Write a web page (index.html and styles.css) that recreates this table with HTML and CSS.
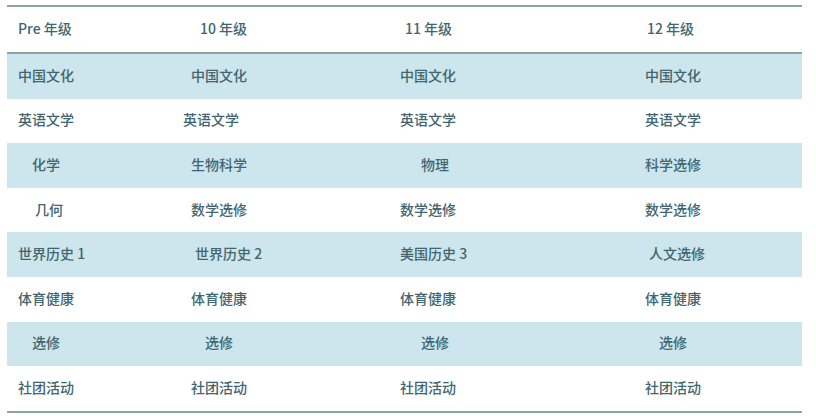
FILE: index.html
```html
<!DOCTYPE html>
<html lang="zh">
<head>
<meta charset="utf-8">
<link rel="stylesheet" href="styles.css">
</head>
<body>
<div class="table">
  <div class="row head">
    <div class="cell p11">Pre 年级</div>
    <div class="cell p17">10 年级</div>
    <div class="cell p5">11 年级</div>
    <div class="cell p2">12 年级</div>
  </div>
  <div class="row blue">
    <div class="cell p11">中国文化</div>
    <div class="cell p8">中国文化</div>
    <div class="cell p0">中国文化</div>
    <div class="cell p0">中国文化</div>
  </div>
  <div class="row">
    <div class="cell p11">英语文学</div>
    <div class="cell p0">英语文学</div>
    <div class="cell p0">英语文学</div>
    <div class="cell p0">英语文学</div>
  </div>
  <div class="row blue">
    <div class="cell p25">化学</div>
    <div class="cell p8">生物科学</div>
    <div class="cell p21">物理</div>
    <div class="cell p0">科学选修</div>
  </div>
  <div class="row">
    <div class="cell p28">几何</div>
    <div class="cell p8">数学选修</div>
    <div class="cell p0">数学选修</div>
    <div class="cell p0">数学选修</div>
  </div>
  <div class="row blue">
    <div class="cell p11">世界历史 1</div>
    <div class="cell p12">世界历史 2</div>
    <div class="cell p0">美国历史 3</div>
    <div class="cell p4">人文选修</div>
  </div>
  <div class="row">
    <div class="cell p11">体育健康</div>
    <div class="cell p8">体育健康</div>
    <div class="cell p0">体育健康</div>
    <div class="cell p0">体育健康</div>
  </div>
  <div class="row blue">
    <div class="cell p25">选修</div>
    <div class="cell p22">选修</div>
    <div class="cell p21">选修</div>
    <div class="cell p14">选修</div>
  </div>
  <div class="row">
    <div class="cell p11">社团活动</div>
    <div class="cell p8">社团活动</div>
    <div class="cell p0">社团活动</div>
    <div class="cell p0">社团活动</div>
  </div>
</div>
</body>
</html>
```
FILE: styles.css
```css
html, body {
  margin: 0;
  padding: 0;
  background: #ffffff;
}
body {
  padding: 5px 0 0 7px;
  font-family: "Noto Sans CJK SC", "Noto Sans", sans-serif;
  font-size: 14px;
  font-weight: 500;
  color: #42666f;
}
.table {
  width: 795px;
  border-top: 2px solid #8ba4aa;
  border-bottom: 2px solid #8ba4aa;
}
.row {
  display: grid;
  grid-template-columns: 176px 217px 245px 157px;
  height: 44.6px;
  align-items: center;
}
.row.head {
  height: 45px;
  border-bottom: 2px solid #8ba4aa;
}
.row.blue {
  background: #cde5ec;
}
.cell {
  white-space: nowrap;
  line-height: 20px;
  padding-bottom: 3px;
}
.p0 { padding-left: 0; }
.p2 { padding-left: 2px; }
.p4 { padding-left: 4px; }
.p5 { padding-left: 5px; }
.p8 { padding-left: 8px; }
.p11 { padding-left: 11px; }
.p12 { padding-left: 12px; }
.p14 { padding-left: 14px; }
.p17 { padding-left: 17px; }
.p21 { padding-left: 21px; }
.p22 { padding-left: 22px; }
.p25 { padding-left: 25px; }
.p28 { padding-left: 28px; }
```
